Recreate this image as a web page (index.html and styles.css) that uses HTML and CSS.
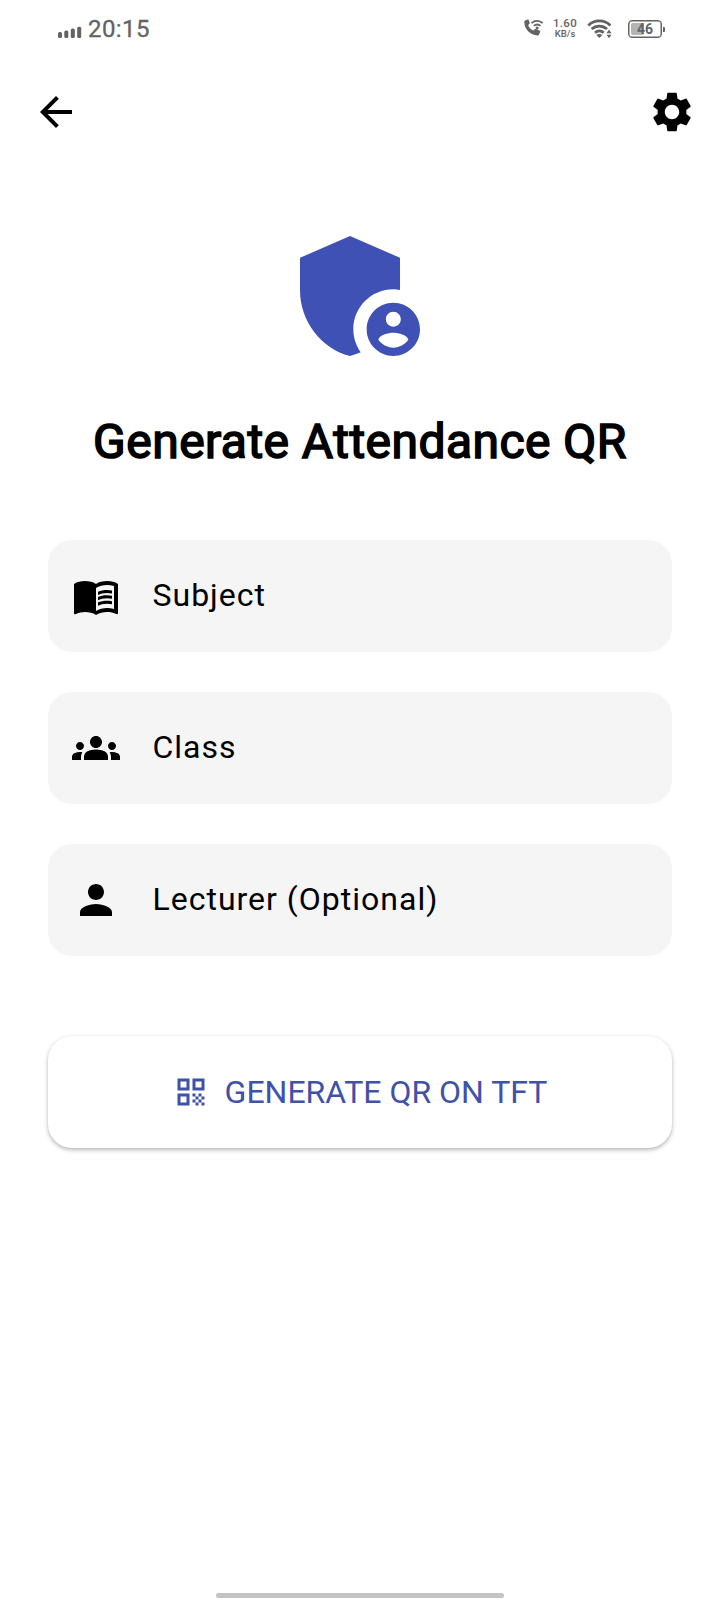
FILE: index.html
```html
<!DOCTYPE html>
<html lang="en">
<head>
<meta charset="utf-8">
<title>Generate Attendance QR</title>
<link rel="stylesheet" href="styles.css">
</head>
<body>
<div class="screen">
  <header class="status">
    <svg class="signal" width="24" height="12" viewBox="0 0 24 12"><rect x="0" y="6" width="4" height="6" rx="1.5"/><rect x="6.3" y="4.5" width="4" height="7.5" rx="1.5"/><rect x="12.8" y="2.5" width="4" height="9.5" rx="1.5"/><rect x="19.2" y="0.7" width="4" height="11.3" rx="1.5"/></svg>
    <span class="clock">20:15</span>
    <svg class="call" width="20" height="18" viewBox="0 0 20 18"><path d="M1.200 1.500 3.600.5C4.300.3 4.700.6 4.900 1.200l.8 2.600c.1.5 0 .9-.4 1.200L4.100 6c.8 2.300 2.800 4.500 5.100 5.600l1.300-1.200c.4-.4.8-.5 1.300-.3l3.700 1.500c.6.300.900.800.600 1.400l-1 2.500c-.3.700-.9 1-1.700.900C6.500 15.900.6 10.500.300 3.400.200 2.400.400 1.800 1.200 1.500z"/><path class="arc" d="M7.500 4.100C10.800 1.100 15.600 1.100 18.700 4.100M9.800 6.900C11.700 5.300 14.600 5.300 16.500 6.900"/><circle cx="13.100" cy="9.100" r="1.500"/></svg>
    <span class="rate"><span class="rate-value">1.60</span><span class="rate-unit">KB/s</span></span>
    <svg class="wifi" width="26" height="20" viewBox="0 0 26 20"><path class="wave" d="M1.300 6.400C7.500.4 17.200.4 23.400 6.400M4.700 10.100C9 6 15.600 6 20 10.100M8 13.700C10.500 11.400 14.200 11.400 16.700 13.700"/><path d="M9.300 16.100C11 14.600 13.700 14.600 15.400 16.100L12.350 19zM19.500 14.200 22 10.600 24.500 14.200zM19.500 15.800H24.500L22 19.300z"/></svg>
    <div class="battery"><span class="charge"></span><span class="percent">46</span></div>
  </header>

  <nav class="toolbar">
    <svg class="icon" viewBox="0 0 24 24"><path d="M20 11H7.830l5.590-5.590L12 4l-8 8 8 8 1.410-1.410L7.830 13H20v-2z"/></svg>
    <svg class="icon" viewBox="0 0 24 24"><path d="M19.140 12.940c.04-.3.06-.61.06-.94 0-.32-.02-.64-.07-.94l2.030-1.580c.18-.14.23-.41.12-.61l-1.920-3.320c-.12-.22-.37-.29-.59-.22l-2.390.96c-.5-.38-1.030-.7-1.620-.94l-.36-2.540c-.04-.24-.24-.41-.48-.41h-3.840c-.24 0-.43.17-.47.41l-.36 2.540c-.59.24-1.130.57-1.620.94l-2.390-.96c-.22-.08-.47 0-.59.22L2.740 8.870c-.12.21-.08.47.12.61l2.030 1.580c-.05.3-.09.63-.09.94s.02.64.07.94l-2.030 1.580c-.18.14-.23.41-.12.61l1.920 3.320c.12.22.37.29.59.22l2.390-.96c.5.38 1.030.7 1.620.94l.36 2.540c.05.24.24.41.48.41h3.840c.24 0 .44-.17.47-.41l.36-2.540c.59-.24 1.130-.56 1.620-.94l2.390.96c.22.08.47 0 .59-.22l1.920-3.320c.12-.22.07-.47-.12-.61l-2.010-1.580zM12 15.600c-1.980 0-3.600-1.620-3.600-3.600s1.620-3.600 3.600-3.600 3.600 1.620 3.600 3.600-1.620 3.600-3.600 3.600z"/></svg>
  </nav>

  <main class="content">
    <svg class="shield" viewBox="0 0 24 24"><path d="M17 11c.34 0 .67.04 1 .09V6.270L10.500 3 3 6.270v4.910c0 4.540 3.200 8.790 7.500 9.820.55-.13 1.080-.32 1.600-.55-.69-.98-1.100-2.170-1.100-3.450 0-3.310 2.690-6 6-6z"/><path d="M17 13c-2.210 0-4 1.790-4 4s1.790 4 4 4 4-1.790 4-4-1.790-4-4-4zm0 1.380c.62 0 1.120.51 1.120 1.120s-.51 1.120-1.120 1.120-1.120-.51-1.120-1.120.5-1.120 1.120-1.120zm0 5.370c-.93 0-1.740-.46-2.240-1.170.05-.72 1.510-1.080 2.240-1.080s2.190.36 2.240 1.080c-.5.71-1.310 1.170-2.240 1.170z"/></svg>
    <h1 class="title">Generate Attendance QR</h1>

    <div class="fields">
      <div class="field">
        <svg class="icon" viewBox="0 0 24 24"><path d="M21 5c-1.110-.35-2.330-.5-3.500-.5-1.950 0-4.050.4-5.500 1.500-1.450-1.100-3.550-1.500-5.500-1.500S2.450 4.900 1 6v14.650c0 .25.25.5.5.5.1 0 .15-.05.25-.05C3.100 20.450 5.050 20 6.500 20c1.950 0 4.050.4 5.500 1.500 1.350-.85 3.800-1.500 5.500-1.500 1.650 0 3.350.3 4.750 1.050.1.05.15.05.25.05.25 0 .5-.25.5-.5V6c-.6-.45-1.250-.75-2-1zm0 13.500c-1.100-.35-2.300-.5-3.500-.5-1.700 0-4.150.65-5.500 1.500V8c1.350-.85 3.800-1.500 5.500-1.500 1.200 0 2.400.15 3.500.5v11.500z"/><path d="M17.500 10.500c.88 0 1.730.09 2.500.26V9.240c-.79-.15-1.640-.24-2.500-.24-1.700 0-3.240.29-4.500.83v1.660c1.130-.64 2.700-.99 4.500-.99zM13 12.490v1.660c1.130-.64 2.700-.99 4.500-.99.88 0 1.730.09 2.500.26V11.900c-.79-.15-1.640-.24-2.500-.24-1.700 0-3.240.3-4.500.83zM17.500 14.330c-1.700 0-3.240.29-4.500.83v1.660c1.130-.64 2.700-.99 4.500-.99.88 0 1.730.09 2.500.26v-1.520c-.79-.16-1.640-.24-2.500-.24z"/></svg>
        <span class="label">Subject</span>
      </div>
      <div class="field">
        <svg class="icon" viewBox="0 0 24 24"><path d="M12 12.750c1.630 0 3.070.39 4.240.9 1.080.48 1.760 1.560 1.760 2.730V18H6v-1.610c0-1.180.68-2.260 1.760-2.730 1.170-.52 2.610-.91 4.240-.91zM4 13c1.100 0 2-.9 2-2s-.9-2-2-2-2 .9-2 2 .9 2 2 2zm1.130 1.100c-.37-.06-.74-.1-1.130-.1-.99 0-1.930.21-2.780.58C.48 14.900 0 15.620 0 16.430V18h4.500v-1.610c0-.83.23-1.610.63-2.290zM20 13c1.100 0 2-.9 2-2s-.9-2-2-2-2 .9-2 2 .9 2 2 2zm4 3.430c0-.81-.48-1.530-1.220-1.850-.85-.37-1.790-.58-2.780-.58-.39 0-.76.04-1.130.1.4.68.63 1.460.63 2.290V18H24v-1.570zM12 6c1.660 0 3 1.340 3 3s-1.340 3-3 3-3-1.340-3-3 1.340-3 3-3z"/></svg>
        <span class="label">Class</span>
      </div>
      <div class="field">
        <svg class="icon" viewBox="0 0 24 24"><path d="M12 12c2.210 0 4-1.790 4-4s-1.790-4-4-4-4 1.790-4 4 1.790 4 4 4zm0 2c-2.670 0-8 1.340-8 4v2h16v-2c0-2.660-5.330-4-8-4z"/></svg>
        <span class="label">Lecturer (Optional)</span>
      </div>
    </div>

    <button class="generate">
      <svg class="qr" viewBox="0 0 24 24"><path d="M3 11h8V3H3v8zm2-6h4v4H5V5zM3 21h8v-8H3v8zm2-6h4v4H5v-4zM13 3v8h8V3h-8zm6 6h-4V5h4v4zM19 19h2v2h-2zM13 13h2v2h-2zM15 15h2v2h-2zM13 17h2v2h-2zM15 19h2v2h-2zM17 17h2v2h-2zM17 13h2v2h-2zM19 15h2v2h-2z"/></svg>
      <span>GENERATE QR ON TFT</span>
    </button>
  </main>

  <div class="home-indicator"></div>
</div>
</body>
</html>
```
FILE: styles.css
```css
* { box-sizing: border-box; }

body {
  margin: 0;
  background: #fff;
  color: #000;
  font-family: Roboto, "Liberation Sans", sans-serif;
}

svg { display: block; flex: none; }

.screen {
  width: 720px;
  height: 1600px;
  display: flex;
  flex-direction: column;
  overflow: hidden;
}

.status {
  height: 56px;
  padding: 0 58px 0 58px;
  display: flex;
  align-items: center;
  color: #636363;
  fill: #636363;
}

.signal { margin-top: 8px; }

.clock {
  margin: 1px auto 0 6px;
  font-size: 24px;
  line-height: 28px;
  letter-spacing: 0.4px;
  -webkit-text-stroke: 0.3px #636363;
}

.call { margin-right: 9px; }
.arc { fill: none; stroke: #636363; stroke-width: 1.8; }

.rate {
  width: 24px;
  margin-right: 10px;
  display: flex;
  flex-direction: column;
  align-items: center;
  font-weight: 500;
}

.rate-value { font-size: 11.5px; line-height: 11px; letter-spacing: 0.3px; }
.rate-unit { font-size: 9.5px; line-height: 10px; }

.wifi { margin: 1px 15px 0 0; }
.wave { fill: none; stroke: #636363; stroke-width: 2.8; }

.battery {
  position: relative;
  width: 34px;
  height: 18px;
  margin-top: 1px;
  border: 1.5px solid #636363;
  border-radius: 4px;
  box-shadow: inset 0 0 0 0.5px #636363;
}

.battery::after {
  content: "";
  position: absolute;
  right: -4px;
  top: 6px;
  width: 2px;
  height: 5px;
  background: #636363;
  border-radius: 0 1px 1px 0;
}

.charge {
  position: absolute;
  left: 2px;
  top: 2px;
  width: 13px;
  height: 12px;
  background: #b4b4b4;
  border-radius: 2px;
}

.percent {
  position: absolute;
  inset: 0;
  text-align: center;
  font-size: 14px;
  font-weight: 700;
  line-height: 17px;
}

.toolbar {
  height: 112px;
  padding: 0 24px 0 32px;
  display: flex;
  align-items: center;
  justify-content: space-between;
}

.icon { width: 48px; height: 48px; }

.content {
  flex: 1;
  padding: 48px 48px 0;
  display: flex;
  flex-direction: column;
}

.shield {
  width: 160px;
  height: 160px;
  align-self: center;
  fill: #3f51b5;
}

.title {
  margin: 38px 0 0;
  font-size: 48px;
  font-weight: 400;
  line-height: 56px;
  letter-spacing: 0.46px;
  text-align: center;
  white-space: nowrap;
  -webkit-text-stroke: 1.6px #000;
}

.fields {
  margin-top: 70px;
  display: flex;
  flex-direction: column;
  gap: 40px;
}

.field {
  height: 112px;
  padding: 0 24px;
  display: flex;
  align-items: center;
  gap: 32px;
  background: #f5f5f5;
  border-radius: 24px;
}

.label {
  padding: 0 0 2px 0.5px;
  font-size: 32px;
  line-height: 38px;
  letter-spacing: 1px;
}

.generate {
  height: 112px;
  margin-top: 80px;
  padding: 0;
  display: flex;
  align-items: center;
  justify-content: center;
  gap: 16px;
  border: 0;
  border-radius: 24px;
  background: #fff;
  box-shadow: 0 2px 4px rgba(0, 0, 0, 0.28), 0 0 2px rgba(0, 0, 0, 0.05);
  color: #3f51a8;
  font: 400 32px/38px Roboto, "Liberation Sans", sans-serif;
}

.qr { width: 36px; height: 36px; fill: #3f51a8; }

.home-indicator {
  width: 288px;
  height: 5px;
  margin: 0 auto 2px;
  border-radius: 3px;
  background: #c3c3c3;
}
```
